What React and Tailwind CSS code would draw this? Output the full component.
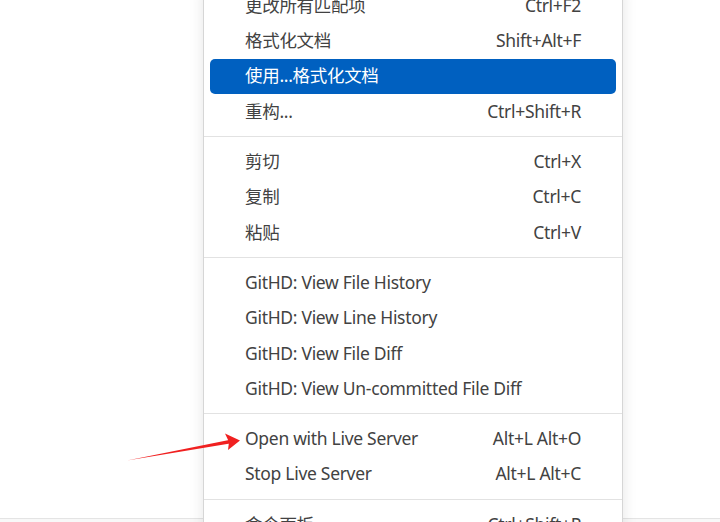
import React from 'react';

const sections = [
  [
    { label: '更改所有匹配项', keys: 'Ctrl+F2' },
    { label: '格式化文档', keys: 'Shift+Alt+F' },
    { label: '使用...格式化文档', keys: '', active: true },
    { label: '重构...', keys: 'Ctrl+Shift+R' },
  ],
  [
    { label: '剪切', keys: 'Ctrl+X' },
    { label: '复制', keys: 'Ctrl+C' },
    { label: '粘贴', keys: 'Ctrl+V' },
  ],
  [
    { label: 'GitHD: View File History', keys: '' },
    { label: 'GitHD: View Line History', keys: '' },
    { label: 'GitHD: View File Diff', keys: '' },
    { label: 'GitHD: View Un-committed File Diff', keys: '' },
  ],
  [
    { label: 'Open with Live Server', keys: 'Alt+L Alt+O' },
    { label: 'Stop Live Server', keys: 'Alt+L Alt+C' },
  ],
  [{ label: '命令面板...', keys: 'Ctrl+Shift+P' }],
];

function MenuItem({ label, keys, active }) {
  return (
    <div
      className={
        'mx-[6px] h-[35.3px] px-[35px] flex items-center justify-between rounded-[5px] ' +
        (active ? 'bg-[#0060c0] text-white' : 'text-[#424242]')
      }
    >
      <span>{label}</span>
      <span>{keys}</span>
    </div>
  );
}

function Arrow() {
  return (
    <svg className="absolute left-0 top-0 pointer-events-none" width="720" height="522">
      <polygon points="127,460.5 229,440 230,443.5" fill="#f02020" />
      <polygon points="240,440.5 225,433.5 229,442 228,450" fill="#f02020" />
    </svg>
  );
}

export default function App() {
  return (
    <div
      className="relative w-[720px] h-[522px] overflow-hidden bg-white"
      style={{ fontFamily: '"Noto Sans", "Noto Sans CJK SC", sans-serif' }}
    >
      <div className="flex flex-col h-full">
        <div className="h-[519px] border-b border-[#e4e4e4] bg-white" />
        <div className="flex-1 bg-[#f8f8f8]" />
      </div>

      {/* context menu */}
      <div className="absolute left-[203px] top-[-13px] w-[420px] bg-white border border-[#d6d6d6] shadow-[0_0_14px_rgba(0,0,0,0.10)] text-[17.5px] leading-none tracking-[-0.3px]">
        {sections.map((items, i) => (
          <div key={i}>
            {i > 0 && <div className="h-px bg-[#e2e2e2] my-[7px]" />}
            {items.map((it) => (
              <MenuItem key={it.label} {...it} />
            ))}
          </div>
        ))}
      </div>

      <Arrow />
    </div>
  );
}
